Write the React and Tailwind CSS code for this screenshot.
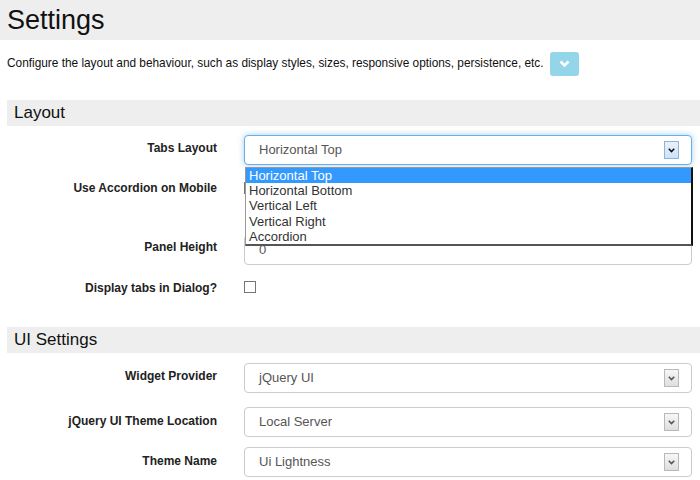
import React from 'react';

const font = { fontFamily: '"Liberation Sans", Arial, sans-serif' };

function Arrow({ focused }) {
  return (
    <span
      className={
        'absolute right-[12px] top-1/2 -translate-y-1/2 flex h-[18px] w-[15px] items-center justify-center border ' +
        (focused
          ? 'border-[#8cb4dc] bg-gradient-to-b from-[#e8f1fb] to-[#cfe2f6]'
          : 'border-[#b9b9b9] bg-gradient-to-b from-[#f7f7f7] to-[#dedede]')
      }
    >
      <svg width="7" height="5" viewBox="0 0 7 5">
        <path d="M0.8 0.8 L3.5 3.6 L6.2 0.8" fill="none" stroke={focused ? '#111' : '#555'} strokeWidth="1.6" />
      </svg>
    </span>
  );
}

function Select({ value, focused, children }) {
  return (
    <div
      className={
        'relative mr-[8px] flex h-[30px] flex-1 items-center rounded-[4px] border bg-white pl-[14px] text-[13px] text-[#555] ' +
        (focused ? 'border-[#66afe9] shadow-[0_0_6px_rgba(102,175,233,0.6)]' : 'border-[#ccc]')
      }
    >
      {value}
      <Arrow focused={focused} />
      {children}
    </div>
  );
}

function Label({ children, pt = 'pt-[6px]' }) {
  return (
    <div className={'w-[217px] shrink-0 text-right text-[12px] font-bold leading-[14px] text-[#222] ' + pt}>
      {children}
    </div>
  );
}

function SectionHead({ children }) {
  return (
    <div className="ml-[7px] flex h-[26px] items-center bg-[#eee] pl-[7px] text-[17px] text-[#111]">
      {children}
    </div>
  );
}

const options = ['Horizontal Top', 'Horizontal Bottom', 'Vertical Left', 'Vertical Right', 'Accordion'];

export default function App() {
  return (
    <div className="h-[480px] w-[700px] overflow-hidden bg-white" style={font}>
      <div className="flex h-[40px] items-center bg-[#eee] pl-[7px] text-[27px] text-[#111]">Settings</div>

      <div className="flex h-[60px] items-start pl-[7px] pt-[12px]">
        <div className="flex items-center gap-[6px]">
          <span className="text-[11.85px] text-[#111]">
            Configure the layout and behaviour, such as display styles, sizes, responsive options, persistence, etc.
          </span>
          <span className="flex h-[24px] w-[29px] items-center justify-center rounded-[3px] bg-[#94d6e9]">
            <svg width="11" height="8" viewBox="0 0 11 8">
              <path d="M1.5 1.5 L5.5 5.5 L9.5 1.5" fill="none" stroke="#fff" strokeWidth="2.6" />
            </svg>
          </span>
        </div>
      </div>

      <SectionHead>Layout</SectionHead>

      <div className="mt-[9px] flex gap-[27px]">
        <Label>Tabs Layout</Label>
        <Select value="Horizontal Top" focused>
          <div className="absolute left-0 top-[31px] z-10 w-[448px] border border-b-2 border-r-2 border-[#999] border-b-[#555] border-r-[#111] bg-white text-[13px] leading-[15.2px] text-[#333]">
            {options.map((o, i) => (
              <div key={o} className={'pl-[3px] ' + (i === 0 ? 'bg-[#3399ff] text-white' : '')}>
                {o}
              </div>
            ))}
          </div>
        </Select>
      </div>

      <div className="mt-[10px] flex h-[50px] gap-[27px]">
        <Label>Use Accordion on Mobile</Label>
        <div className="mt-[7px] h-[12px] w-[12px] border border-[#767676] bg-white" />
      </div>

      <div className="mt-[10px] flex gap-[27px]">
        <Label pt="pt-[5px]">Panel Height</Label>
        <div className="mr-[8px] flex h-[30px] flex-1 items-center rounded-[4px] border border-[#ccc] bg-white pl-[14px] text-[13px] text-[#555]">
          0
        </div>
      </div>

      <div className="mt-[14px] flex h-[18px] gap-[27px]">
        <Label pt="pt-[2px]">Display tabs in Dialog?</Label>
        <div className="mt-[2px] h-[12px] w-[12px] border border-[#767676] bg-white" />
      </div>

      <div className="mt-[30px]">
        <SectionHead>UI Settings</SectionHead>
      </div>

      <div className="mt-[10px] flex gap-[27px]">
        <Label>Widget Provider</Label>
        <Select value="jQuery UI" />
      </div>

      <div className="mt-[14px] flex gap-[27px]">
        <Label pt="pt-[7px]">jQuery UI Theme Location</Label>
        <Select value="Local Server" />
      </div>

      <div className="mt-[10px] flex gap-[27px]">
        <Label pt="pt-[7px]">Theme Name</Label>
        <Select value="Ui Lightness" />
      </div>
    </div>
  );
}
